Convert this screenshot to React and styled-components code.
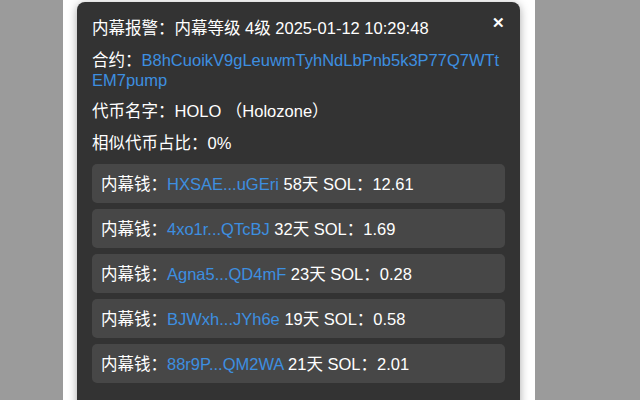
import React from "react";
import styled, { createGlobalStyle } from "styled-components";

const Global = createGlobalStyle`
  html, body { margin: 0; padding: 0; background: #9b9b9b; height: 100%; overflow: hidden; }
  * { box-sizing: border-box; }
`;

const Page = styled.div`
  display: flex;
  padding-left: 63px;
  height: 400px;
`;

const Column = styled.div`
  width: 472px;
  height: 400px;
  background: #ffffff;
  padding: 2px 15px 0 14px;
  overflow: hidden;
`;

const Panel = styled.div`
  position: relative;
  background: #333333;
  border-radius: 8px 8px 0 0;
  box-shadow: 0 2px 10px rgba(0, 0, 0, 0.35);
  padding: 16px 15px 20px 15px;
  min-height: 420px;
  color: #ffffff;
  font-family: "Liberation Sans", Arial, "Noto Sans CJK SC", sans-serif;
  font-size: 16.5px;
  line-height: 20px;
`;

const Close = styled.span`
  position: absolute;
  top: 11px;
  right: 15px;
  color: #ffffff;
  font-weight: bold;
  font-size: 15px;
  line-height: 20px;
  cursor: pointer;
`;

const Line = styled.div`
  margin: 0 0 11.5px 0;
  word-break: break-all;

  &:last-of-type {
    margin-bottom: 12px;
  }
`;

const Link = styled.span`
  color: #3d8fe0;
`;

const List = styled.div`
  display: flex;
  flex-direction: column;
  gap: 6px;
`;

const Row = styled.div`
  background: #474747;
  border-radius: 5px;
  padding: 10px 9px 9px 9px;
  height: 39px;
`;

const wallets = [
  ["HXSAE...uGEri", "58天", "12.61"],
  ["4xo1r...QTcBJ", "32天", "1.69"],
  ["Agna5...QD4mF", "23天", "0.28"],
  ["BJWxh...JYh6e", "19天", "0.58"],
  ["88r9P...QM2WA", "21天", "2.01"],
];

export default function App() {
  return (
    <>
      <Global />
      <Page>
        <Column>
          <Panel>
            <Close>✕</Close>
            <Line>内幕报警：内幕等级 4级 2025-01-12 10:29:48</Line>
            <Line>
              合约：<Link>B8hCuoikV9gLeuwmTyhNdLbPnb5k3P77Q7WTtEM7pump</Link>
            </Line>
            <Line>代币名字：HOLO （Holozone）</Line>
            <Line>相似代币占比：0%</Line>
            <List>
              {wallets.map(([addr, days, sol]) => (
                <Row key={addr}>
                  内幕钱：<Link>{addr}</Link> {days} SOL：{sol}
                </Row>
              ))}
            </List>
          </Panel>
        </Column>
      </Page>
    </>
  );
}
